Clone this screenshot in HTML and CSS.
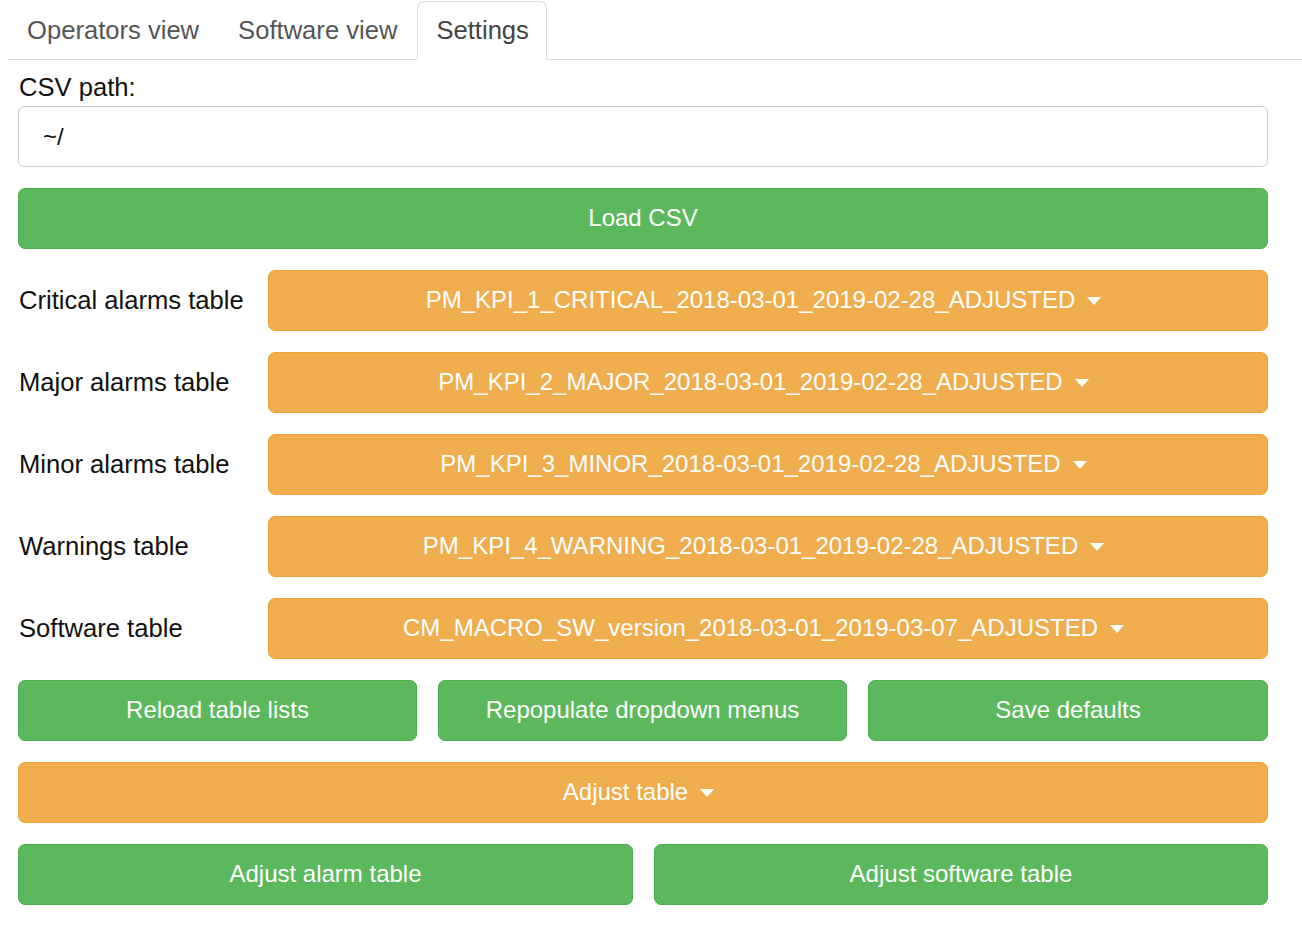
FILE: index.html
```html
<!DOCTYPE html>
<html>
<head>
<meta charset="utf-8">
<link rel="stylesheet" href="styles.css">
</head>
<body>
<ul class="tabs">
  <li class="tab">Operators view</li>
  <li class="tab">Software view</li>
  <li class="tab active">Settings</li>
</ul>
<div class="content">
  <label class="field-label">CSV path:</label>
  <div class="input">~/</div>
  <div class="stack">
    <div class="btn green">Load CSV</div>
    <div class="row">
      <div class="row-label">Critical alarms table</div>
      <div class="btn orange">PM_KPI_1_CRITICAL_2018-03-01_2019-02-28_ADJUSTED<span class="caret"></span></div>
    </div>
    <div class="row">
      <div class="row-label">Major alarms table</div>
      <div class="btn orange">PM_KPI_2_MAJOR_2018-03-01_2019-02-28_ADJUSTED<span class="caret"></span></div>
    </div>
    <div class="row">
      <div class="row-label">Minor alarms table</div>
      <div class="btn orange">PM_KPI_3_MINOR_2018-03-01_2019-02-28_ADJUSTED<span class="caret"></span></div>
    </div>
    <div class="row">
      <div class="row-label">Warnings table</div>
      <div class="btn orange">PM_KPI_4_WARNING_2018-03-01_2019-02-28_ADJUSTED<span class="caret"></span></div>
    </div>
    <div class="row">
      <div class="row-label">Software table</div>
      <div class="btn orange">CM_MACRO_SW_version_2018-03-01_2019-03-07_ADJUSTED<span class="caret"></span></div>
    </div>
    <div class="three">
      <div class="btn green">Reload table lists</div>
      <div class="btn green">Repopulate dropdown menus</div>
      <div class="btn green">Save defaults</div>
    </div>
    <div class="btn orange">Adjust table<span class="caret"></span></div>
    <div class="two">
      <div class="btn green">Adjust alarm table</div>
      <div class="btn green">Adjust software table</div>
    </div>
  </div>
</div>
</body>
</html>
```

FILE: styles.css
```css
html, body {
  margin: 0;
  padding: 0;
  background: #fff;
  font-family: "Liberation Sans", Arial, Helvetica, sans-serif;
  color: #111;
}

.tabs {
  list-style: none;
  margin: 0 0 0 8px;
  padding: 1px 0 0 0;
  display: flex;
  border-bottom: 1px solid #ddd;
}

.tab {
  height: 57px;
  padding: 0 17px 0 18px;
  margin-right: 2px;
  margin-bottom: -1px;
  border: 1px solid transparent;
  border-radius: 7px 7px 0 0;
  display: flex;
  align-items: center;
  font-size: 25.6px;
  color: #555;
}

.tab.active {
  border-color: #ddd #ddd #fff #ddd;
  background: #fff;
  color: #444;
}

.content {
  margin: 0 34px 0 18px;
  padding-top: 11px;
}

.field-label {
  display: block;
  font-size: 25.6px;
  line-height: 32px;
  margin: 0 0 3px 1px;
  color: #111;
}

.input {
  height: 59px;
  border: 1px solid #ccc;
  border-radius: 6px;
  box-sizing: content-box;
  padding: 0 0 0 24px;
  display: flex;
  align-items: center;
  font-size: 24px;
  color: #111;
  box-shadow: inset 0 1px 1px rgba(0,0,0,0.04);
}

.stack {
  margin-top: 21px;
  display: flex;
  flex-direction: column;
  gap: 21px;
}

.btn {
  height: 59px;
  border: 1px solid;
  border-radius: 7px;
  display: flex;
  align-items: center;
  justify-content: center;
  font-size: 24px;
  line-height: 1;
  padding-bottom: 1px;
  box-sizing: content-box;
  height: 58px;
  color: #fff;
  white-space: nowrap;
}

.green {
  background: #5cb85c;
  border-color: #4cae4c;
}

.orange {
  background: #f0ad4e;
  border-color: #eea236;
}

.caret {
  display: inline-block;
  width: 0;
  height: 0;
  margin-left: 12px;
  margin-right: 9px;
  margin-top: 2px;
  border-top: 8px solid #fff;
  border-left: 7.5px solid transparent;
  border-right: 7.5px solid transparent;
}

.row {
  display: grid;
  grid-template-columns: 250px 1fr;
  align-items: center;
}

.row-label {
  font-size: 25.6px;
  padding-left: 1px;
  padding-bottom: 1px;
  color: #111;
}

.three {
  display: grid;
  grid-template-columns: 399px 409px 1fr;
  gap: 21px;
}

.two {
  display: grid;
  grid-template-columns: 615px 1fr;
  gap: 21px;
}
```
